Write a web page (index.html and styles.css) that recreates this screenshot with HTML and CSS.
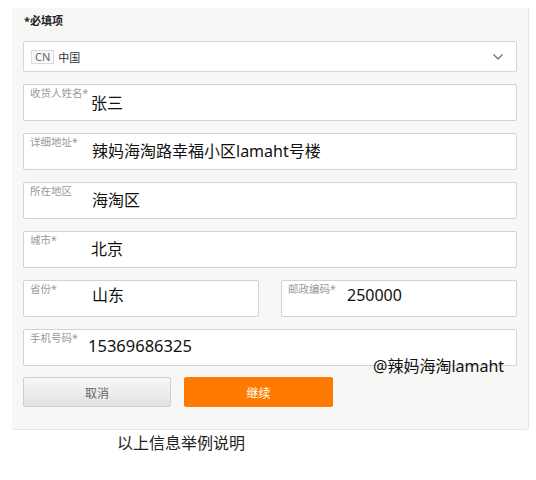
FILE: index.html
```html
<!DOCTYPE html>
<html lang="zh">
<head>
<meta charset="utf-8">
<link rel="stylesheet" href="styles.css">
</head>
<body>
<div class="panel">
  <div class="title">*必填项</div>
  <div class="select">
    <span class="cc">CN</span>
    <span class="country">中国</span>
    <svg class="chev" width="12" height="8" viewBox="0 0 12 8"><path d="M1.5 1.5 L6 6 L10.5 1.5" fill="none" stroke="#666" stroke-width="1.2"/></svg>
  </div>
  <div class="field"><span class="lab">收货人姓名*</span><span class="val v0">张三</span></div>
  <div class="field"><span class="lab">详细地址*</span><span class="val v2">辣妈海淘路幸福小区lamaht号楼</span></div>
  <div class="field"><span class="lab">所在地区</span><span class="val v2">海淘区</span></div>
  <div class="field"><span class="lab">城市*</span><span class="val">北京</span></div>
  <div class="pair">
    <div class="field"><span class="lab">省份*</span><span class="val v2 up">山东</span></div>
    <div class="field"><span class="lab lab-short">邮政编码*</span><span class="val up">250000</span></div>
  </div>
  <div class="field"><span class="lab">手机号码*</span><span class="val vn">15369686325</span></div>
  <div class="buttons">
    <button class="btn cancel">取消</button>
    <button class="btn go">继续</button>
  </div>
  <div class="mark">@辣妈海淘lamaht</div>
</div>
<div class="note">以上信息举例说明</div>
</body>
</html>
```
FILE: styles.css
```css
* { box-sizing: border-box; }
body {
  margin: 0;
  background: #fff;
  font-family: "Noto Sans", "Noto Sans CJK SC", sans-serif;
  color: #111;
}
.panel {
  position: relative;
  width: 517px;
  margin: 8px 0 0 12px;
  padding: 6px 11px 22px 11px;
  background: #f7f7f5;
  border-right: 1px solid #e6e6e6;
  border-bottom: 1px solid #e6e6e6;
  border-radius: 0 0 3px 3px;
}
.title {
  font-size: 11px;
  font-weight: bold;
  line-height: 14px;
  height: 27px;
  padding-left: 1px;
  color: #222;
}
.select {
  height: 31px;
  background: #fff;
  border: 1px solid #d6d6d6;
  border-radius: 2px;
  display: flex;
  align-items: center;
  padding: 0 12px 0 7px;
  margin-bottom: 12px;
}
.cc {
  font-size: 11px;
  color: #666;
  border: 1px solid #dcdcdc;
  background: #f8f8f8;
  padding: 0 3px;
  line-height: 12px;
  height: 14px;
  margin-right: 4px;
}
.country { font-size: 11px; color: #333; flex: 1; }
.chev { display: block; }
.field {
  height: 37px;
  background: #fff;
  border: 1px solid #d2d2d2;
  border-radius: 2px;
  display: flex;
  align-items: flex-start;
  padding-left: 6px;
  margin-bottom: 12px;
}
.lab {
  font-size: 10.5px;
  color: #999;
  line-height: 13px;
  padding-top: 2px;
  width: 61px;
  flex: none;
  white-space: nowrap;
}
.lab-short { width: 59px; }
.val {
  font-size: 16px;
  line-height: 20px;
  padding-top: 7px;
  color: #111;
  white-space: nowrap;
}
.v0 { padding-top: 8px; }
.v2 { margin-left: 1px; }
.up { padding-top: 4px; }
.vn { margin-left: -3px; padding-top: 6px; font-size: 16.5px; }
.pair {
  display: grid;
  grid-template-columns: 236px 236px;
  justify-content: space-between;
}
.buttons {
  display: flex;
  gap: 13px;
  margin-top: -1px;
}
.btn {
  height: 30px;
  border-radius: 2px;
  font-family: "Noto Sans CJK SC", sans-serif;
  font-size: 12px;
  cursor: pointer;
}
.cancel {
  width: 148px;
  background: linear-gradient(#f7f7f7, #e2e2e2);
  border: 1px solid #cfcfcf;
  color: #666;
}
.go {
  width: 149px;
  background: #ff7a00;
  border: 1px solid #ff7a00;
  color: #fff;
}
.mark {
  position: absolute;
  left: 361px;
  top: 348px;
  font-size: 16px;
  line-height: 20px;
  color: #111;
  white-space: nowrap;
}
.note {
  margin: 3px 0 0 117px;
  font-size: 16px;
  line-height: 20px;
  color: #222;
}
```
